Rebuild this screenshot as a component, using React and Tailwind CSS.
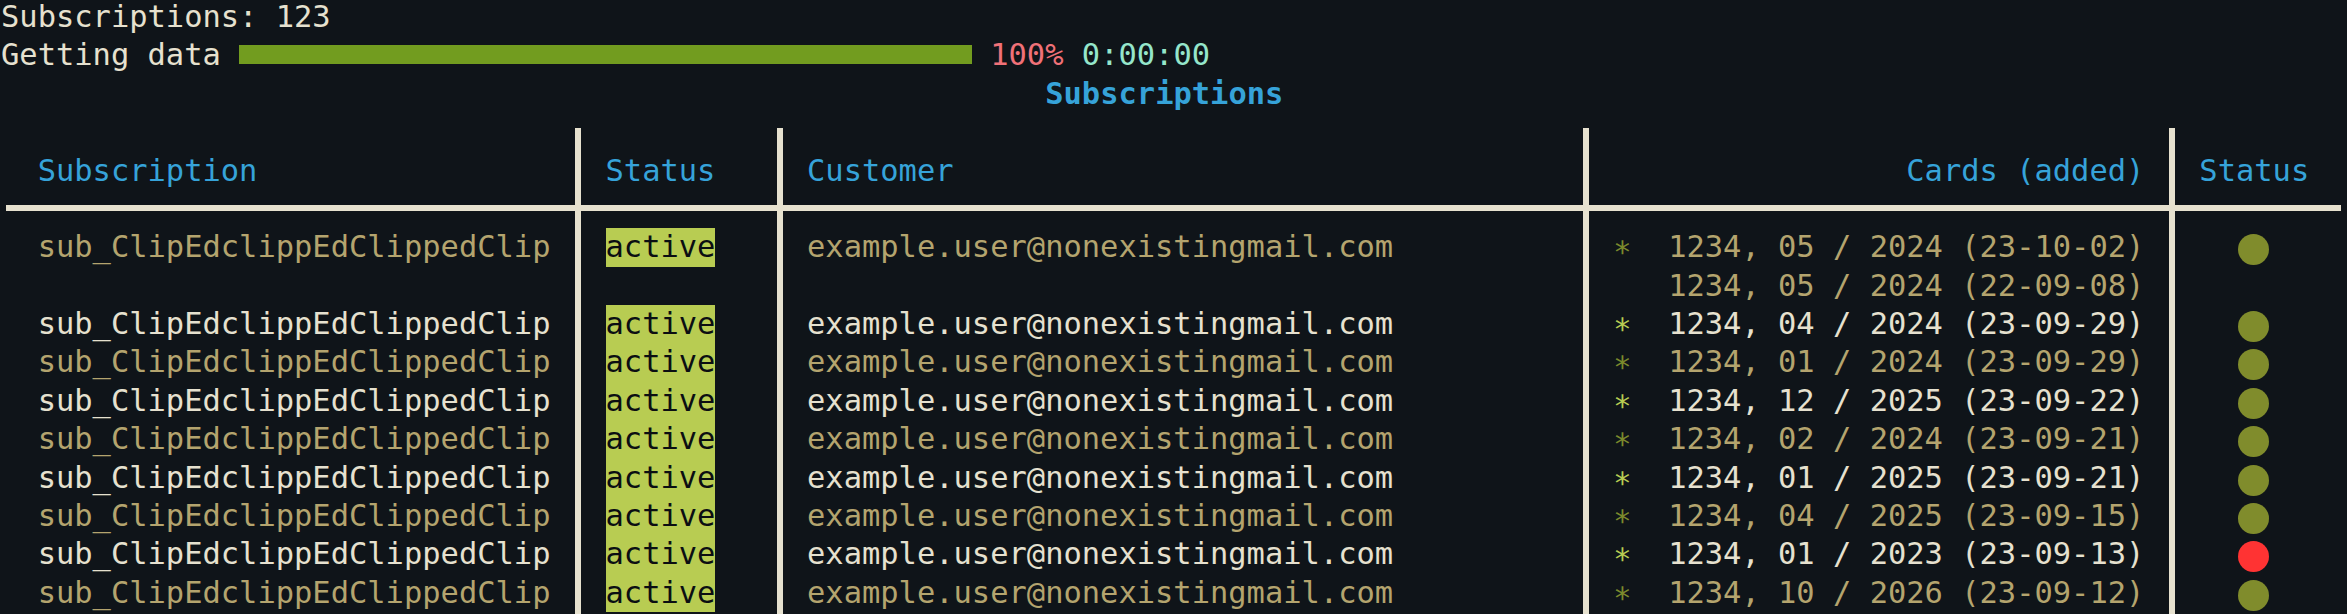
import React from "react";

// terminal cell: 18.32px wide, 38.375px tall
const subs = [
  { dim: true, cards: [["05 / 2024", "23-10-02"], ["05 / 2024", "22-09-08"]] },
  { dim: false, cards: [["04 / 2024", "23-09-29"]] },
  { dim: true, cards: [["01 / 2024", "23-09-29"]] },
  { dim: false, cards: [["12 / 2025", "23-09-22"]] },
  { dim: true, cards: [["02 / 2024", "23-09-21"]] },
  { dim: false, cards: [["01 / 2025", "23-09-21"]] },
  { dim: true, cards: [["04 / 2025", "23-09-15"]] },
  { dim: false, cards: [["01 / 2023", "23-09-13"]], expired: true },
  { dim: true, cards: [["10 / 2026", "23-09-12"]] },
];

const rowStart = [
  "row-start-4",
  "row-start-5",
  "row-start-6",
  "row-start-7",
  "row-start-8",
  "row-start-9",
  "row-start-10",
  "row-start-11",
  "row-start-12",
];

const Divider = ({ col }) => (
  <div className={`${col} row-span-full justify-self-center w-[6px] mt-[15px] bg-[#e6e1cf]`} />
);

function SubRow({ sub, index }) {
  const rs = rowStart[index];
  const text = sub.dim ? "text-[#b4a46e]" : "text-[#e6e1cf]";
  const star = sub.dim ? "text-[#7c8a2c]" : "text-[#b8cc52]";

  return (
    <>
      <div className={`col-start-1 ${rs} pl-[36.64px] whitespace-pre ${text}`}>
        sub_ClipEdclippEdClippedClip
      </div>
      <div className={`col-start-3 ${rs} pl-[18.32px]`}>
        <span className="inline-block bg-[#b8cc52] text-[#0b0e12]">active</span>
      </div>
      <div className={`col-start-5 ${rs} pl-[18.32px] whitespace-pre ${text}`}>
        example.user@nonexistingmail.com
      </div>
      <div className={`col-start-7 ${rs} pr-[18.32px] text-right whitespace-pre ${text}`}>
        {sub.cards.map(([exp, added], i) => (
          <div key={i}>
            <span className={star}>{i === 0 ? "∗" : " "}</span>
            {`  1234, ${exp} (${added})`}
          </div>
        ))}
      </div>
      <div className={`col-start-9 ${rs} pl-[57px] pt-[6px]`}>
        <div
          className={`w-[31px] h-[31px] rounded-full ${
            sub.expired ? "bg-[#ff3333]" : "bg-[#808c2c]"
          }`}
        />
      </div>
    </>
  );
}

export default function App() {
  return (
    <div className="w-[2347px] h-[614px] overflow-hidden bg-[#0f1419] font-['DejaVu_Sans_Mono',monospace] text-[30.43px] leading-[38.375px] text-[#e6e1cf]">
      <div className="mt-[-2px] pl-[1px]">
        <div className="h-[38.375px] whitespace-pre">Subscriptions: 123</div>

        <div className="flex h-[38.375px] whitespace-pre">
          <span>Getting data </span>
          <div className="w-[732.8px] h-[19.4px] mt-[8.6px] bg-[#729c1f]" />
          <span> </span>
          <span className="text-[#f07178]">100%</span>
          <span> </span>
          <span className="text-[#95e6cb]">0:00:00</span>
        </div>

        <div className="h-[38.375px] pl-[1044.24px] font-bold text-[#36a3d9]">Subscriptions</div>

        <div className="grid grid-cols-[567.92px_18.32px_183.2px_18.32px_787.76px_18.32px_567.92px_18.32px_164.88px] grid-rows-[repeat(3,38.375px)_76.75px_repeat(9,38.375px)]">
          <Divider col="col-start-2" />
          <Divider col="col-start-4" />
          <Divider col="col-start-6" />
          <Divider col="col-start-8" />
          <div className="col-span-full row-start-3 self-start mt-[15.5px] ml-[5px] mr-[5px] h-[6px] bg-[#e6e1cf]" />

          <div className="col-start-1 row-start-2 pl-[36.64px] text-[#36a3d9]">Subscription</div>
          <div className="col-start-3 row-start-2 pl-[18.32px] text-[#36a3d9]">Status</div>
          <div className="col-start-5 row-start-2 pl-[18.32px] text-[#36a3d9]">Customer</div>
          <div className="col-start-7 row-start-2 pr-[18.32px] text-right text-[#36a3d9]">Cards (added)</div>
          <div className="col-start-9 row-start-2 pl-[18.32px] text-[#36a3d9]">Status</div>

          {subs.map((sub, i) => (
            <SubRow key={i} sub={sub} index={i} />
          ))}
        </div>
      </div>
    </div>
  );
}
